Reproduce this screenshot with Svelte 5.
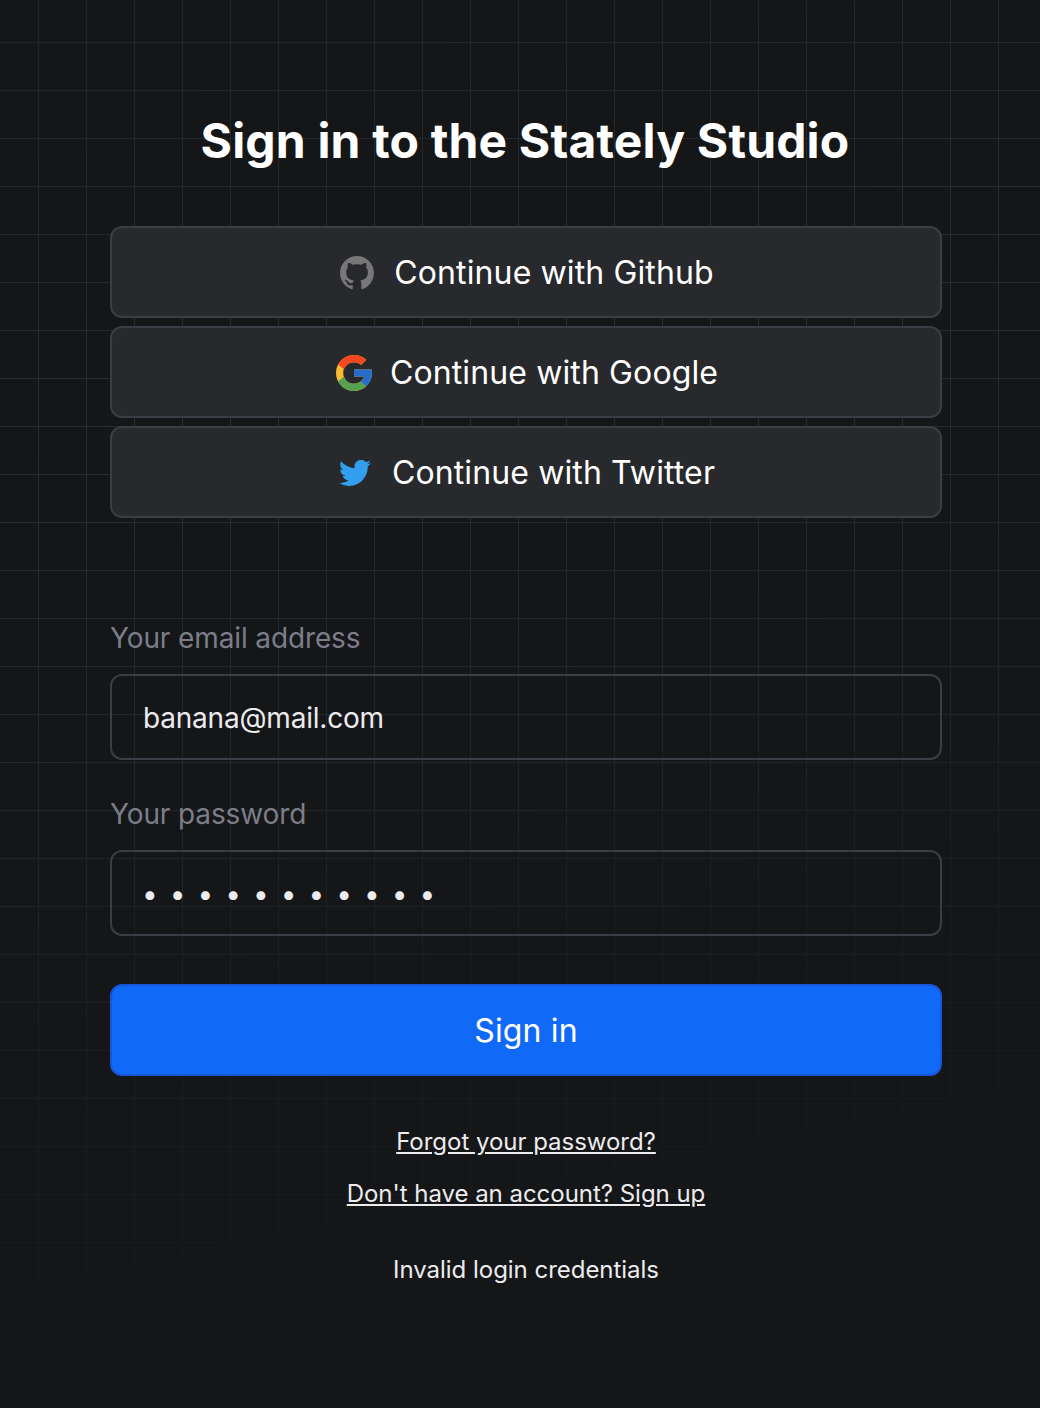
<script>
  let email = $state('banana@mail.com');
  let password = $state('bananabread');
</script>

{#snippet githubIcon()}
  <svg class="icon github" viewBox="0 0 16 16" aria-hidden="true">
    <path fill-rule="evenodd" d="M8 0C3.58 0 0 3.58 0 8c0 3.54 2.29 6.53 5.47 7.59.4.07.55-.17.55-.38 0-.19-.01-.82-.01-1.49-2.01.37-2.53-.49-2.69-.94-.09-.23-.48-.94-.82-1.13-.28-.15-.68-.52-.01-.53.63-.01 1.08.58 1.23.82.72 1.21 1.87.87 2.33.66.07-.52.28-.87.51-1.07-1.78-.2-3.64-.89-3.64-3.95 0-.87.31-1.59.82-2.15-.08-.2-.36-1.02.08-2.12 0 0 .67-.21 2.2.82.64-.18 1.32-.27 2-.27s1.36.09 2 .27c1.53-1.04 2.2-.82 2.2-.82.44 1.1.16 1.92.08 2.12.51.56.82 1.27.82 2.15 0 3.07-1.87 3.75-3.65 3.95.29.25.54.73.54 1.48 0 1.07-.01 1.93-.01 2.2 0 .21.15.46.55.38A8.01 8.01 0 0 0 16 8c0-4.42-3.58-8-8-8z" />
  </svg>
{/snippet}

{#snippet googleIcon()}
  <svg class="icon google" viewBox="4 4 40 40" aria-hidden="true">
    <path fill="#fbb92f" d="M43.611 20.083H42V20H24v8h11.303c-1.649 4.657-6.08 8-11.303 8-6.627 0-12-5.373-12-12s5.373-12 12-12c3.059 0 5.842 1.154 7.961 3.039l5.657-5.657C34.046 6.053 29.268 4 24 4 12.955 4 4 12.955 4 24s8.955 20 20 20 20-8.955 20-20c0-1.341-.138-2.65-.389-3.917z" />
    <path fill="#f4471f" d="m6.306 14.691 6.571 4.819C14.655 15.108 18.961 12 24 12c3.059 0 5.842 1.154 7.961 3.039l5.657-5.657C34.046 6.053 29.268 4 24 4 16.318 4 9.656 8.337 6.306 14.691z" />
    <path fill="#56a14f" d="M24 44c5.166 0 9.86-1.977 13.409-5.192l-6.19-5.238C29.211 35.091 26.715 36 24 36c-5.202 0-9.619-3.317-11.283-7.946l-6.522 5.025C9.505 39.556 16.227 44 24 44z" />
    <path fill="#256fcb" d="M43.611 20.083H42V20H24v8h11.303c-.792 2.237-2.231 4.166-4.087 5.571l6.193 5.237C36.971 39.205 44 34 44 24c0-1.341-.138-2.65-.389-3.917z" />
  </svg>
{/snippet}

{#snippet twitterIcon()}
  <svg class="icon twitter" viewBox="0 2.25 24 19.5" aria-hidden="true">
    <path d="M23.953 4.57a10 10 0 0 1-2.825.775 4.958 4.958 0 0 0 2.163-2.723c-.951.555-2.005.959-3.127 1.184a4.92 4.92 0 0 0-8.384 4.482C7.69 8.095 4.067 6.13 1.64 3.162a4.822 4.822 0 0 0-.666 2.475c0 1.71.87 3.213 2.188 4.096a4.904 4.904 0 0 1-2.228-.616v.06a4.923 4.923 0 0 0 3.946 4.827 4.996 4.996 0 0 1-2.212.085 4.936 4.936 0 0 0 4.604 3.417 9.867 9.867 0 0 1-6.102 2.105c-.39 0-.779-.023-1.17-.067a13.995 13.995 0 0 0 7.557 2.209c9.053 0 13.998-7.496 13.998-13.985 0-.21 0-.42-.015-.63A9.935 9.935 0 0 0 24 4.59z" />
  </svg>
{/snippet}

<main class="page">
  <h1>Sign in to the Stately Studio</h1>

  <div class="providers">
    <button class="button" type="button">{@render githubIcon()}<span class="label">Continue with Github</span></button>
    <button class="button" type="button">{@render googleIcon()}<span class="label">Continue with Google</span></button>
    <button class="button" type="button">{@render twitterIcon()}<span class="label">Continue with Twitter</span></button>
  </div>

  <form onsubmit={(e) => e.preventDefault()}>
    <label for="email">Your email address</label>
    <input id="email" type="text" bind:value={email} />
    <label for="password">Your password</label>
    <input id="password" type="password" bind:value={password} />
    <button class="button primary" type="submit"><span class="label">Sign in</span></button>
  </form>

  <nav class="links">
    <a href="#forgot">Forgot your password?</a>
    <a href="#signup">Don't have an account? Sign up</a>
  </nav>
  <p class="error">Invalid login credentials</p>
</main>

<style>
  :global(body) {
    background: #151618;
  }

  .page {
    box-sizing: border-box;
    display: flex;
    flex-direction: column;
    height: 1408px;
    padding: 110px 98px 0 110px;
    overflow: hidden;
    color: #fff;
    font-family: Inter, sans-serif;
    font-weight: 400;
    background:
      linear-gradient(169deg, rgb(21 22 24 / 45%) 0, rgb(21 22 24 / 0%) 28%, #151618 91%),
      linear-gradient(to right, #2b2c2e 1px, transparent 1px) 38px 0 / 48px 48px,
      linear-gradient(to bottom, #2b2c2e 1px, transparent 1px) 0 42px / 48px 48px,
      #151618;
  }

  h1 {
    margin: 0 2px 54px 0;
    font-size: 48px;
    line-height: 62px;
    font-weight: 700;
    letter-spacing: 0.17px;
    text-align: center;
    white-space: nowrap;
  }

  .providers {
    display: flex;
    flex-direction: column;
    gap: 8px;
  }

  .button {
    box-sizing: border-box;
    display: flex;
    flex: none;
    align-items: center;
    justify-content: center;
    width: 100%;
    height: 92px;
    padding: 2px 0 0 2px;
    color: #fff;
    font: 400 32px/40px Inter, sans-serif;
    letter-spacing: 0.12px;
    background: #28292d;
    border: 2px solid #3b3c44;
    border-radius: 12px;
  }

  .icon {
    flex: none;
  }

  .github {
    width: 34px;
    height: 34px;
    margin-right: 20px;
    fill: #777;
  }

  .google {
    width: 36px;
    height: 36px;
    margin-right: 18px;
  }

  .twitter {
    width: 32px;
    height: 26px;
    margin-right: 21px;
    fill: #329fee;
  }

  form {
    display: flex;
    flex-direction: column;
    margin-top: 100px;
  }

  label {
    height: 40px;
    margin-bottom: 16px;
    color: #7d7d89;
    font-size: 28px;
    line-height: 40px;
    letter-spacing: -0.12px;
  }

  input {
    box-sizing: border-box;
    height: 86px;
    margin: 0 0 34px;
    padding: 2px 30px 0 31px;
    color: #ececee;
    font: 400 28px/40px Inter, sans-serif;
    letter-spacing: -0.2px;
    background: transparent;
    border: 2px solid #3b3c44;
    border-radius: 12px;
    outline: none;
  }

  input[type='password'] {
    padding-left: 30px;
    letter-spacing: 12px;
  }

  .primary {
    margin-top: 14px;
    padding-left: 0;
    background: #1169f8;
    border-color: #1855d8;
  }

  .links {
    display: flex;
    flex-direction: column;
    gap: 20px;
    align-items: center;
    margin-top: 50px;
    font-size: 24px;
    line-height: 32px;
    letter-spacing: -0.03px;
  }

  .links a {
    color: #ececee;
    text-decoration: underline;
  }

  .error {
    margin: 44px 0 0;
    color: #ececee;
    font-size: 24px;
    line-height: 32px;
    letter-spacing: -0.03px;
    text-align: center;
  }
</style>
